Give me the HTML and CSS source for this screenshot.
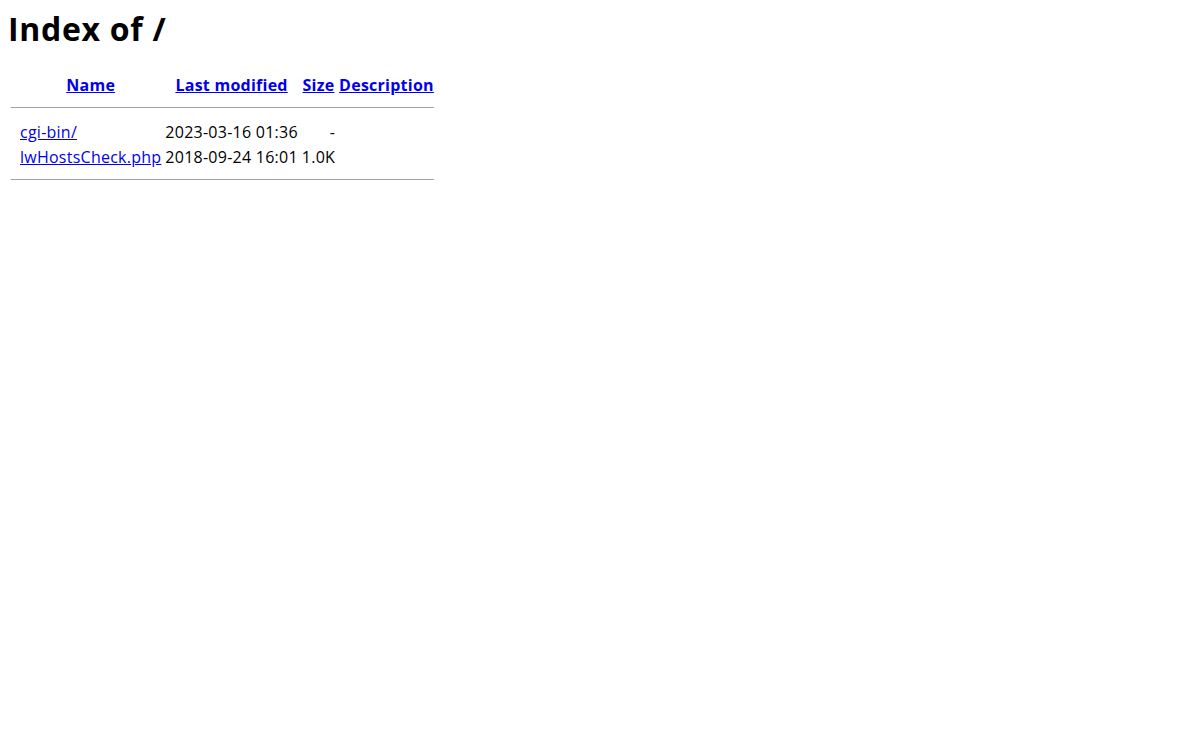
FILE: index.html
```html
<!DOCTYPE html>
<html>
<head>
    <title>Index of /</title>
    <link rel="stylesheet" href="styles.css">
</head>
<body>
    <h1 class="title">Index of /</h1>
    <table class="listing">
        <tr>
            <th class="icon"></th>
            <th><a href="?C=N;O=D">Name</a></th>
            <th><a href="?C=M;O=A">Last modified</a></th>
            <th><a href="?C=S;O=A">Size</a></th>
            <th><a href="?C=D;O=A">Description</a></th>
        </tr>
        <tr><th colspan="5"><hr class="rule"></th></tr>
        <tr>
            <td class="icon"></td>
            <td><a href="cgi-bin/">cgi-bin/</a></td>
            <td class="right">2023-03-16 01:36</td>
            <td class="right">- </td>
            <td>&nbsp;</td>
        </tr>
        <tr>
            <td class="icon"></td>
            <td><a href="lwHostsCheck.php">lwHostsCheck.php</a></td>
            <td class="right">2018-09-24 16:01</td>
            <td class="right">1.0K</td>
            <td>&nbsp;</td>
        </tr>
        <tr><th colspan="5"><hr class="rule"></th></tr>
    </table>
</body>
</html>
```

FILE: styles.css
```css
body {
    margin: 8px;
    font-family: "Open Sans", "Noto Sans CJK SC", sans-serif;
    font-size: 16px;
    line-height: 21px;
    letter-spacing: 0.25px;
    color: #000;
    background: #fff;
}

.title {
    margin: 0 0 22px;
    font-size: 32px;
    line-height: 42px;
    font-weight: bold;
    letter-spacing: 0.7px;
}

.listing {
    border-spacing: 2px;
}

.listing th,
.listing td {
    padding: 1px;
    vertical-align: top;
}

.listing .icon {
    width: 5px;
}

.listing a {
    color: #0000ee;
}

.right {
    text-align: right;
}

/* thin grey divider, like the server default */
.rule {
    height: 0;
    margin: 7px 0 10px;
    border: 0;
    border-top: 1px solid #a0a0a0;
}
```
